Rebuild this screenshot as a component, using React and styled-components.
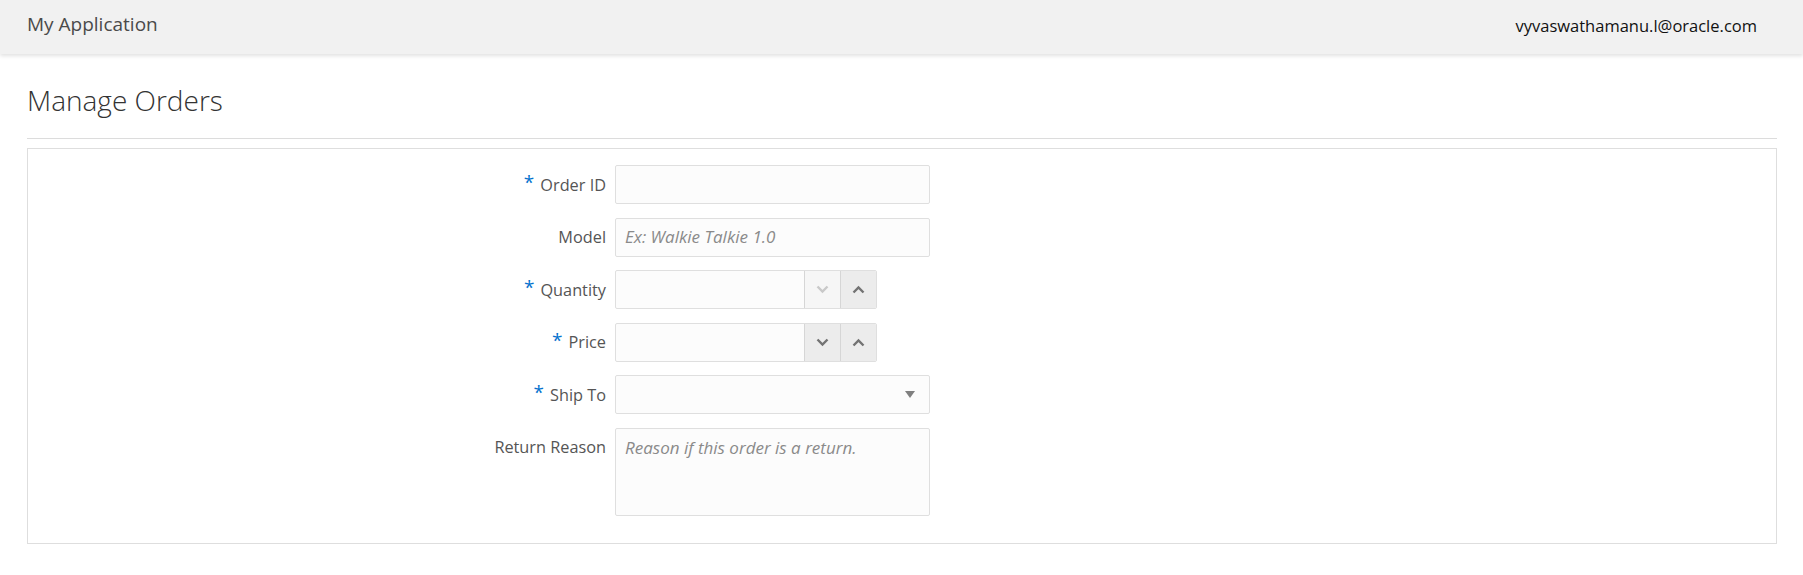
import React from "react";
import styled, { createGlobalStyle } from "styled-components";

const GlobalStyle = createGlobalStyle`
  body {
    margin: 0;
    background: #ffffff;
    font-family: "Open Sans", "Noto Sans", sans-serif;
    color: #333333;
  }
`;

const Header = styled.header`
  display: flex;
  align-items: center;
  justify-content: space-between;
  height: 54px;
  padding: 0 46px 0 27px;
  background: #f1f1f1;
  box-shadow: 0 2px 4px rgba(0, 0, 0, 0.12);
  position: relative;
`;

const AppName = styled.div`
  font-size: 19px;
  color: #4a4a4a;
  margin-top: -7px;
`;

const UserName = styled.div`
  font-size: 16.5px;
  color: #111111;
  margin-top: -3px;
`;

const Main = styled.main`
  padding: 0 26px 0 27px;
`;

const Title = styled.h1`
  margin: 0;
  padding: 30px 0 22px;
  font-size: 28px;
  font-weight: 300;
  color: #333333;
  border-bottom: 1px solid #dcdcdc;
  line-height: 32px;
`;

const Panel = styled.section`
  margin-top: 9px;
  border: 1px solid #dedede;
  padding: 16px 0 27px;
`;

const Form = styled.div`
  display: grid;
  grid-template-columns: 578px 315px;
  column-gap: 9px;
  row-gap: 13.5px;
`;

const Label = styled.label`
  display: flex;
  justify-content: flex-end;
  align-items: center;
  height: 39px;
  font-size: 16.3px;
  color: #555555;
`;

const Star = styled.span`
  color: #0572ce;
  font-size: 19px;
  line-height: 1;
  align-self: flex-start;
  margin-top: 8px;
  margin-right: 6px;
`;

const fieldBase = `
  box-sizing: border-box;
  border: 1px solid #dfdfdf;
  border-radius: 2px;
  background: #fcfcfc;
  font-family: "Open Sans", "Noto Sans", sans-serif;
  font-size: 16px;
  color: #333333;
  outline: none;
  &::placeholder {
    color: #8a8a8a;
    font-style: italic;
    font-size: 17px;
  }
`;

const TextInput = styled.input`
  ${fieldBase}
  width: 315px;
  height: 39px;
  padding: 0 9px;
`;

const TextArea = styled.textarea`
  ${fieldBase}
  width: 315px;
  height: 88px;
  padding: 7px 9px;
  resize: none;
`;

const Spinner = styled.div`
  display: flex;
  width: 262px;
  height: 39px;
  box-sizing: border-box;
  border: 1px solid #dfdfdf;
  border-radius: 2px;
  background: #fcfcfc;
  overflow: hidden;
`;

const SpinInput = styled.input`
  flex: 1;
  min-width: 0;
  border: none;
  background: transparent;
  outline: none;
  padding: 0 9px;
  font-size: 16px;
`;

const SpinButton = styled.button`
  width: 36px;
  border: none;
  border-left: 1px solid #d6d6d6;
  background: ${(p) => (p.disabled ? "#f6f6f6" : "#ececec")};
  color: ${(p) => (p.disabled ? "#c9c9c9" : "#737373")};
  display: flex;
  align-items: center;
  justify-content: center;
  padding: 0;
  cursor: pointer;
`;

const SelectBox = styled.div`
  ${fieldBase}
  width: 315px;
  height: 39px;
  display: flex;
  align-items: center;
  justify-content: flex-end;
  padding-right: 14px;
`;

const Caret = styled.span`
  width: 0;
  height: 0;
  border-left: 5px solid transparent;
  border-right: 5px solid transparent;
  border-top: 7px solid #808080;
`;

const Chevron = ({ up }) => (
  <svg width="13" height="9" viewBox="0 0 13 9">
    <path
      d={up ? "M1.5 7.5 L6.5 2.5 L11.5 7.5" : "M1.5 1.5 L6.5 6.5 L11.5 1.5"}
      fill="none"
      stroke="currentColor"
      strokeWidth="2.4"
    />
  </svg>
);

function NumberField({ downDisabled }) {
  return (
    <Spinner>
      <SpinInput />
      <SpinButton disabled={downDisabled}>
        <Chevron />
      </SpinButton>
      <SpinButton>
        <Chevron up />
      </SpinButton>
    </Spinner>
  );
}

function FieldLabel({ required, children }) {
  return (
    <Label>
      {required && <Star>*</Star>}
      {children}
    </Label>
  );
}

export default function App() {
  return (
    <>
      <GlobalStyle />
      <Header>
        <AppName>My Application</AppName>
        <UserName>vyvaswathamanu.l@oracle.com</UserName>
      </Header>
      <Main>
        <Title>Manage Orders</Title>
        <Panel>
          <Form>
            <FieldLabel required>Order ID</FieldLabel>
            <TextInput />
            <FieldLabel>Model</FieldLabel>
            <TextInput placeholder="Ex: Walkie Talkie 1.0" />
            <FieldLabel required>Quantity</FieldLabel>
            <NumberField downDisabled />
            <FieldLabel required>Price</FieldLabel>
            <NumberField />
            <FieldLabel required>Ship To</FieldLabel>
            <SelectBox>
              <Caret />
            </SelectBox>
            <FieldLabel>Return Reason</FieldLabel>
            <TextArea placeholder="Reason if this order is a return." />
          </Form>
        </Panel>
      </Main>
    </>
  );
}
